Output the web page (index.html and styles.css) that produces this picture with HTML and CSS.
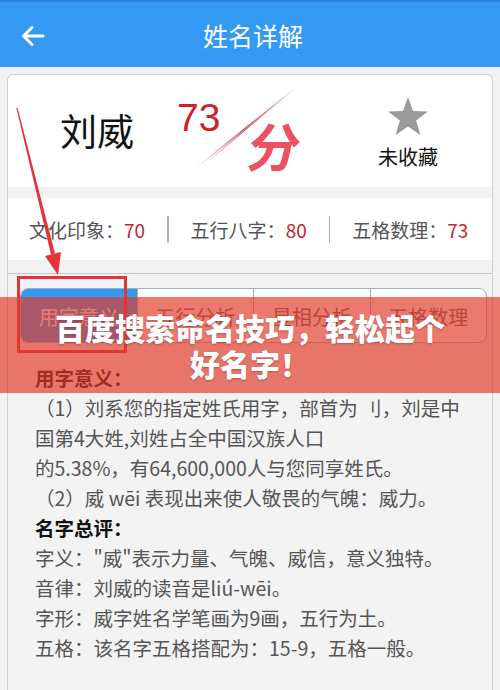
FILE: index.html
```html
<!DOCTYPE html>
<html lang="zh-CN">
<head>
<meta charset="utf-8">
<title>姓名详解</title>
<link rel="stylesheet" href="styles.css">
</head>
<body>
<div class="header">
  <svg class="back" width="24" height="22" viewBox="0 0 24 22"><path d="M22 11H3M11 2.5L2.5 11L11 19.5" fill="none" stroke="#fff" stroke-width="3" stroke-linecap="round" stroke-linejoin="round"/></svg>
  <h1 class="title">姓名详解</h1>
</div>
<div class="card">
  <div class="top">
    <div class="name">刘威</div>
    <div class="score">
      <span class="num">73</span>
      <svg class="slash" width="140" height="111" viewBox="0 0 140 111">
        <defs>
          <linearGradient id="g1" x1="0" y1="1" x2="1" y2="0">
            <stop offset="0" stop-color="#d24a5a" stop-opacity="0"/>
            <stop offset="0.5" stop-color="#c83a4a" stop-opacity="0.9"/>
            <stop offset="1" stop-color="#d24a5a" stop-opacity="0.1"/>
          </linearGradient>
        </defs>
        <line x1="26" y1="93" x2="124" y2="14" stroke="url(#g1)" stroke-width="1.3"/>
        <line x1="36" y1="88" x2="112" y2="24" stroke="url(#g1)" stroke-width="1.1"/>
      </svg>
      <span class="fen">分</span>
    </div>
    <div class="fav">
      <svg class="star" width="40" height="40" viewBox="0 0 40 40"><polygon points="20,1 25,15.1 40,15.5 28.1,24.6 32.4,39 20,30.5 7.6,39 11.9,24.6 0,15.5 15,15.1" fill="#9a9a9a"/></svg>
      <span class="fav-label">未收藏</span>
    </div>
  </div>
  <div class="sep"></div>
  <div class="stats">
    <span class="stat">文化印象：<b class="val">70</b></span>
    <i class="divider"></i>
    <span class="stat">五行八字：<b class="val">80</b></span>
    <i class="divider"></i>
    <span class="stat">五格数理：<b class="val">73</b></span>
  </div>
  <div class="sep2"></div>
  <div class="content">
    <div class="tabs">
      <div class="tab active">用字意义</div>
      <div class="tab">五行分析</div>
      <div class="tab">星相分析</div>
      <div class="tab">五格数理</div>
    </div>
    <div class="text">
      <p class="head">用字意义：</p>
      <p>（1）刘系您的指定姓氏用字，部首为 刂，刘是中<br>国第4大姓,刘姓占全中国汉族人口<br>的5.38%，有64,600,000人与您同享姓氏。</p>
      <p>（2）威 wēi 表现出来使人敬畏的气魄：威力。</p>
      <p class="head">名字总评：</p>
      <p>字义："威"表示力量、气魄、威信，意义独特。</p>
      <p>音律：刘威的读音是liú-wēi。</p>
      <p>字形：威字姓名学笔画为9画，五行为土。</p>
      <p>五格：该名字五格搭配为：15-9，五格一般。</p>
    </div>
  </div>
</div>
<div class="mark-rect"></div>
<svg class="mark-arrow" width="500" height="690" viewBox="0 0 500 690">
  <polygon points="16.4,108 17.6,107.8 55,253.5 51,254.5" fill="#e3343a"/>
  <polygon points="45,256 61,252 58,275" fill="#e3343a"/>
</svg>
<div class="banner">
  <p class="banner-text">百度搜索命名技巧，轻松起个好名字！</p>
</div>
</body>
</html>
```
FILE: styles.css
```css
* { box-sizing: border-box; }
html, body { margin: 0; padding: 0; }
body {
  width: 500px;
  height: 690px;
  overflow: hidden;
  position: relative;
  background: #f2f2f2;
  font-family: "Noto Sans CJK SC", "Noto Sans", sans-serif;
  color: #555;
}
.header {
  height: 67px;
  background: #3499f2;
  border-top: 2px solid #2b84d6;
  display: flex;
  align-items: center;
  position: relative;
}
.back {
  position: absolute;
  left: 21px;
  top: 23px;
}
.title {
  margin: 0 auto;
  padding-left: 6px;
  font-size: 25px;
  font-weight: 400;
  color: #fff;
  line-height: 30px;
}
.card {
  margin: 7px 7px 0;
  border: 1px solid #cfcfcf;
  border-bottom: none;
  border-radius: 6px 6px 0 0;
  background: #f3f3f3;
  height: 620px;
}
.top {
  height: 112px;
  background: #fff;
  border-radius: 6px 6px 0 0;
  display: flex;
  align-items: center;
  padding-left: 52px;
}
.name {
  width: 110px;
  font-size: 37px;
  color: #111;
  line-height: 44px;
  padding-bottom: 2px;
}
.score {
  position: relative;
  width: 140px;
  height: 112px;
  align-self: flex-start;
}
.num {
  position: absolute;
  left: 7px;
  top: 23px;
  font-family: "Liberation Sans", Arial, sans-serif;
  font-size: 39px;
  line-height: 39px;
  color: #cc2229;
}
.slash {
  position: absolute;
  left: 0;
  top: 0;
}
.fen {
  position: absolute;
  left: 79px;
  top: 44px;
  font-size: 52px;
  line-height: 52px;
  font-weight: 700;
  color: #ea5262;
  transform: skewX(-10deg);
}
.fav {
  margin-left: auto;
  margin-right: 44px;
  width: 80px;
  display: flex;
  flex-direction: column;
  align-items: center;
  gap: 9px;
  padding-top: 2px;
}
.fav-label {
  font-size: 20px;
  line-height: 24px;
  color: #111;
}
.sep { height: 11px; background: #f2f2f2; }
.stats {
  height: 62px;
  background: #fff;
  display: flex;
  align-items: center;
  gap: 22px;
  padding-left: 21px;
  font-size: 19px;
  color: #555;
}
.stat { white-space: nowrap; }
.val { font-weight: 400; color: #c0282d; }
.divider {
  display: block;
  width: 1.5px;
  height: 27px;
  background: #b0b0b0;
}
.sep2 {
  height: 14px;
  background: #f2f2f2;
  border-bottom: 1px solid #c6c6c6;
}
.content { padding-top: 14px; }
.tabs {
  margin: 0 5px 0 12px;
  height: 55px;
  display: flex;
  border: 1px solid #9fb0bf;
  border-radius: 8px;
  overflow: hidden;
  background: #fff;
}
.tab {
  flex: 1;
  display: flex;
  align-items: center;
  justify-content: center;
  font-size: 20px;
  color: #666;
  border-left: 1px solid #9fb0bf;
  padding-top: 2px;
}
.tab:first-child { border-left: none; }
.tab.active { background: #3399f3; color: #fff; }
.text {
  margin-top: 20px;
  padding-left: 27px;
  font-size: 19.5px;
  line-height: 30px;
  color: #555;
  white-space: nowrap;
}
.text p { margin: 0; }
.text .head { color: #111; font-weight: 700; }
.mark-rect {
  position: absolute;
  left: 17px;
  top: 276px;
  width: 110px;
  height: 77px;
  border: 3px solid #e0353b;
}
.mark-arrow {
  position: absolute;
  left: 0;
  top: 0;
  pointer-events: none;
}
.banner {
  position: absolute;
  left: 0;
  top: 297px;
  width: 500px;
  height: 96px;
  background: rgba(226, 58, 40, 0.68);
  display: flex;
  align-items: center;
  justify-content: center;
}
.banner-text {
  margin: 0;
  width: 400px;
  text-align: center;
  color: #fff;
  font-size: 30px;
  line-height: 36px;
  font-weight: 900;
  text-shadow: 0 1px 2px rgba(0, 0, 0, 0.25);
}
```
